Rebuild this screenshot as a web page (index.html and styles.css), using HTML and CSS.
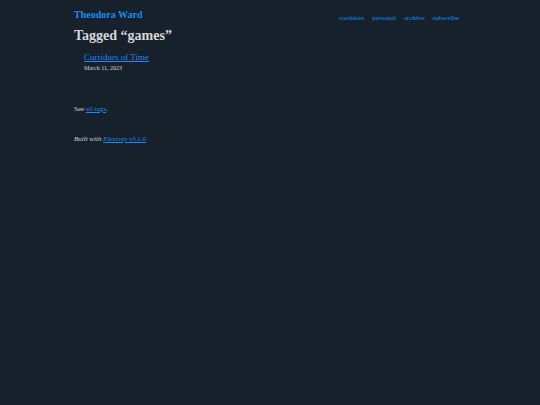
FILE: index.html
```html
<!DOCTYPE html>
<html lang="en">
<head>
<meta charset="utf-8">
<meta name="viewport" content="width=device-width, initial-scale=1">
<title>Tagged “games”</title>
<link rel="stylesheet" href="styles.css">
</head>
<body>
<header class="site-header">
  <a class="site-name" href="#">Theodora Ward</a>
  <nav class="site-nav">
    <a href="#">corridors</a>
    <a href="#">personal</a>
    <a href="#">archive</a>
    <a href="#">subscribe</a>
  </nav>
</header>
<main>
  <h1>Tagged “games”</h1>
  <ol class="posts">
    <li><a href="#">Corridors of Time</a><time datetime="2023-03-11">March 11, 2023</time></li>
  </ol>
  <p class="see-tags">See <a href="#">all tags</a>.</p>
</main>
<footer><p><em>Built with <a href="#">Eleventy v3.1.6</a></em></p></footer>
</body>
</html>
```
FILE: styles.css
```css
* {
  box-sizing: border-box;
}

body {
  max-width: 400px;
  margin: 0 auto;
  padding: 0 4px;
  background: #16212c;
  color: #d8d7d7;
  font-family: "Liberation Serif", serif;
  font-size: 7px;
  line-height: 10px;
}

a {
  color: #148ef2;
}

.site-header {
  display: flex;
  justify-content: space-between;
  align-items: flex-start;
  padding: 9px 7px 0 0;
}

.site-name {
  font-size: 10px;
  font-weight: bold;
  line-height: 12px;
  text-decoration: none;
}

.site-nav {
  display: flex;
  gap: 8px;
  padding-top: 4px;
}

.site-nav a {
  text-decoration: none;
}

h1 {
  margin: 3px 0 0;
  font-size: 14px;
  line-height: 20px;
}

.posts {
  margin: 5px 0 0;
  padding: 0 0 0 10px;
  list-style: none;
}

.posts a {
  display: block;
  width: fit-content;
  font-size: 9px;
  line-height: 12px;
}

.posts time {
  display: block;
  font-size: 6px;
  line-height: 10px;
}

.see-tags {
  margin: 31px 0 0;
}

footer p {
  margin: 20px 0 0;
}
```
